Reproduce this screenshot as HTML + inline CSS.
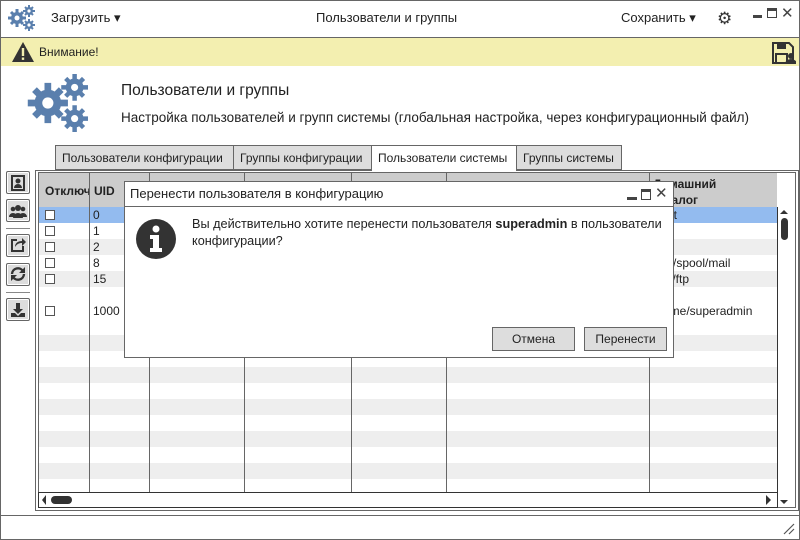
<!DOCTYPE html>
<html><head><meta charset="utf-8"><style>
*{box-sizing:border-box;margin:0;padding:0}
body{width:800px;height:540px;position:relative;overflow:hidden;background:#fff;font-family:"Liberation Sans","DejaVu Sans",sans-serif;font-size:12px;color:#222}
.a{position:absolute}
.bd{border:1px solid #666}
.tab{position:absolute;top:145px;height:25px;border:1px solid #666;background:#ddd;font-size:12px;line-height:24px;padding-left:6px;white-space:nowrap}
.sb{position:absolute;left:6px;width:24px;height:23px;border:1px solid #666;border-radius:2px;background:#ddd;box-shadow:inset 0 0 0 1px #fff}
.row{position:absolute;left:39px;width:738px;height:16px}
.g{background:#eee}
.cb{position:absolute;left:6px;top:3px;width:10px;height:10px;border:1px solid #555;background:#fff}
.cl{position:absolute;top:172px;height:320px;width:1px;background:#666}
.t{position:absolute;font-size:12px;line-height:16px}
.btn{position:absolute;top:327px;height:24px;border:1px solid #666;background:#ddd;text-align:center;line-height:22px;font-size:12px}
</style></head><body>
<div class="a bd" style="left:0;top:0;width:800px;height:540px"></div>
<svg class="a" style="left:8px;top:5px" width="28" height="26" viewBox="0 0 28 26" fill="#5a7fad">
<circle cx="9" cy="13" r="6"/><circle cx="21" cy="6" r="4"/><circle cx="21" cy="20" r="4"/>
<g stroke="#5a7fad" stroke-width="3"><path d="M9 4v18M0 13h18M3 7l12 12M15 7L3 19"/><path d="M21 0v12M15 6h12M17 2l8 8M25 2l-8 8M21 14v12M15 20h12M17 16l8 8M25 16l-8 8" stroke-width="2"/></g>
<circle cx="9" cy="13" r="2.5" fill="#fff"/><circle cx="21" cy="6" r="1.6" fill="#fff"/><circle cx="21" cy="20" r="1.6" fill="#fff"/></svg>
<div class="t" style="left:51px;top:10px;font-size:13px">Загрузить ▾</div>
<div class="t" style="left:316px;top:10px;font-size:13px">Пользователи и группы</div>
<div class="t" style="left:621px;top:10px;font-size:13px">Сохранить ▾</div>
<div class="a" style="left:717px;top:10px;font-size:17px;line-height:17px;color:#333">⚙</div>
<div class="a" style="left:753px;top:15px;width:9px;height:3px;background:#444"></div>
<div class="a" style="left:767px;top:8px;width:10px;height:10px;border:1.5px solid #444;border-top-width:3px"></div>
<div class="a" style="left:781px;top:4px;font-size:15px;color:#444">✕</div>
<div class="a" style="left:1px;top:37px;width:798px;height:1px;background:#666"></div>
<div class="a" style="left:1px;top:38px;width:798px;height:28px;background:#f3efb0"></div>
<svg class="a" style="left:11px;top:41px" width="24" height="22"><path d="M12 1L23 21H1Z" fill="#333"/><rect x="10.8" y="7" width="2.4" height="8" fill="#f3efb0"/><rect x="10.8" y="16.5" width="2.4" height="2.4" fill="#f3efb0"/></svg>
<div class="t" style="left:39px;top:44px">Внимание!</div>
<svg class="a" style="left:772px;top:42px" width="24" height="22"><path d="M1 1h16l4 4v16H1Z" fill="none" stroke="#333" stroke-width="2"/><rect x="5" y="1" width="9" height="6" fill="#333"/><rect x="4" y="12" width="11" height="9" fill="none" stroke="#333" stroke-width="2"/><circle cx="19" cy="14" r="3" fill="#333"/><path d="M13 22a6 5 0 0 1 12 0Z" fill="#333"/></svg>
<svg class="a" style="left:26px;top:74px" width="66" height="58" viewBox="0 0 28 26" fill="#5a7fad">
<circle cx="9" cy="13" r="6"/><circle cx="21" cy="6" r="4"/><circle cx="21" cy="20" r="4"/>
<g stroke="#5a7fad" stroke-width="3"><path d="M9 4v18M0 13h18M3 7l12 12M15 7L3 19"/><path d="M21 0v12M15 6h12M17 2l8 8M25 2l-8 8M21 14v12M15 20h12M17 16l8 8M25 16l-8 8" stroke-width="2"/></g>
<circle cx="9" cy="13" r="2.5" fill="#fff"/><circle cx="21" cy="6" r="1.6" fill="#fff"/><circle cx="21" cy="20" r="1.6" fill="#fff"/></svg>
<div class="t" style="left:121px;top:82px;font-size:15.5px;line-height:18px">Пользователи и группы</div>
<div class="t" style="left:121px;top:110px;font-size:13.5px;line-height:16px">Настройка пользователей и групп системы (глобальная настройка, через конфигурационный файл)</div>
<div class="tab" style="left:55px;width:179px">Пользователи конфигурации</div>
<div class="tab" style="left:233px;width:139px">Группы конфигурации</div>
<div class="tab" style="left:371px;width:146px;background:#fff;border-bottom-color:#fff;height:26px">Пользователи системы</div>
<div class="tab" style="left:516px;width:106px">Группы системы</div>
<div class="a bd" style="left:35px;top:170px;width:764px;height:341px;border-top:none"></div>
<div class="a" style="left:35px;top:170px;width:337px;height:1px;background:#666"></div>
<div class="a" style="left:516px;top:170px;width:283px;height:1px;background:#666"></div>
<div class="a bd" style="left:38px;top:172px;width:758px;height:336px"></div>
<div class="a" style="left:39px;top:173px;width:738px;height:34px;background:#ccc"></div>
<div class="t" style="left:45px;top:183px;font-weight:bold">Отключ</div>
<div class="t" style="left:94px;top:183px;font-weight:bold">UID</div>
<div class="t" style="left:653px;top:176px;font-weight:bold">Домашний<br>каталог</div>
<div class="row" style="top:207px;background:#93bbef"><div class="cb"></div></div>
<div class="row" style="top:223px"><div class="cb"></div></div>
<div class="row g" style="top:239px"><div class="cb"></div></div>
<div class="row" style="top:255px"><div class="cb"></div></div>
<div class="row g" style="top:271px"><div class="cb"></div></div>
<div class="row" style="top:303px"><div class="cb"></div></div>
<div class="row g" style="top:335px"></div>
<div class="row g" style="top:367px"></div>
<div class="row g" style="top:399px"></div>
<div class="row g" style="top:431px"></div>
<div class="row g" style="top:463px"></div>
<div class="t" style="left:93px;top:207px">0</div>
<div class="t" style="left:93px;top:223px">1</div>
<div class="t" style="left:93px;top:239px">2</div>
<div class="t" style="left:93px;top:255px">8</div>
<div class="t" style="left:93px;top:271px">15</div>
<div class="t" style="left:93px;top:303px">1000</div>
<div class="t" style="left:653px;top:207px">/root</div>
<div class="t" style="left:653px;top:255px">/var/spool/mail</div>
<div class="t" style="left:653px;top:271px">/srv/ftp</div>
<div class="t" style="left:653px;top:303px">/home/superadmin</div>
<div class="cl" style="left:89px"></div><div class="cl" style="left:149px"></div><div class="cl" style="left:244px"></div><div class="cl" style="left:351px"></div><div class="cl" style="left:446px"></div><div class="cl" style="left:649px"></div>
<div class="a" style="left:38px;top:492px;width:740px;height:16px;border:1px solid #333;background:#fff"></div>
<div class="a" style="left:51px;top:496px;width:21px;height:8px;border-radius:4px;background:#333"></div>
<div class="a" style="left:42px;top:495px;border:5px solid transparent;border-right:4px solid #333;border-left:0"></div>
<div class="a" style="left:766px;top:495px;border:5px solid transparent;border-left:5px solid #333;border-right:0"></div>
<div class="a" style="left:777px;top:207px;width:1px;height:301px;background:#333"></div>
<div class="a" style="left:781px;top:218px;width:7px;height:22px;border-radius:4px;background:#333"></div>
<div class="a" style="left:780px;top:210px;border:4px solid transparent;border-bottom:4px solid #333;border-top:0"></div>
<div class="a" style="left:780px;top:500px;border:4px solid transparent;border-top:4px solid #333;border-bottom:0"></div>
<div class="sb" style="top:171px"></div><div class="sb" style="top:199px"></div><div class="sb" style="top:234px"></div><div class="sb" style="top:263px"></div><div class="sb" style="top:298px"></div>
<div class="a" style="left:6px;top:228px;width:24px;height:1px;background:#888"></div>
<div class="a" style="left:6px;top:292px;width:24px;height:1px;background:#888"></div>
<svg class="a" style="left:10px;top:175px" width="16" height="16"><rect x="2" y="1" width="12" height="14" fill="none" stroke="#333" stroke-width="2"/><circle cx="8" cy="6" r="2.5" fill="#333"/><path d="M4 13a4 4 0 0 1 8 0Z" fill="#333"/></svg>
<svg class="a" style="left:9px;top:203px" width="18" height="16"><circle cx="9" cy="5" r="3" fill="#333"/><circle cx="4" cy="6" r="2.3" fill="#333"/><circle cx="14" cy="6" r="2.3" fill="#333"/><path d="M0 14a4 4 0 0 1 8 0ZM10 14a4 4 0 0 1 8 0ZM4 15a5 5 0 0 1 10 0Z" fill="#333"/></svg>
<svg class="a" style="left:10px;top:237px" width="16" height="16"><path d="M7 3H2v11h11V9" fill="none" stroke="#333" stroke-width="2"/><path d="M5 10c0-4 3-6 7-6V1l4 4-4 4V6c-3 0-5 1-7 4Z" fill="#333"/></svg>
<svg class="a" style="left:10px;top:266px" width="16" height="16"><path d="M2 8a6 6 0 0 1 11-3M14 8a6 6 0 0 1-11 3" fill="none" stroke="#333" stroke-width="2.4"/><path d="M15 1v6H9ZM1 15V9h6Z" fill="#333"/></svg>
<svg class="a" style="left:10px;top:302px" width="16" height="16"><path d="M6 1h4v6h3l-5 5-5-5h3Z" fill="#333"/><path d="M1 11h4l3 3 3-3h4v4H1Z" fill="#333"/></svg>
<div class="a bd" style="left:124px;top:181px;width:550px;height:177px;background:#fff"></div>
<div class="a" style="left:125px;top:206px;width:548px;height:1px;background:#666"></div>
<div class="t" style="left:130px;top:186px;font-size:13px">Перенести пользователя в конфигурацию</div>
<div class="a" style="left:627px;top:197px;width:10px;height:3px;background:#444"></div>
<div class="a" style="left:641px;top:189px;width:10px;height:11px;border:1.5px solid #444;border-top-width:3px"></div>
<div class="a" style="left:655px;top:184px;font-size:15px;color:#444">✕</div>
<svg class="a" style="left:135px;top:218px" width="42" height="42"><circle cx="21" cy="21" r="20" fill="#333"/><circle cx="21" cy="11" r="3.5" fill="#fff"/><path d="M15 17h9v13h3v4H15v-4h3v-9h-3Z" fill="#fff"/></svg>
<div class="t" style="left:192px;top:216px;font-size:12.7px;line-height:17px">Вы действительно хотите перенести пользователя <b>superadmin</b> в пользователи<br>конфигурации?</div>
<div class="btn" style="left:492px;width:83px">Отмена</div>
<div class="btn" style="left:584px;width:83px">Перенести</div>
<div class="a" style="left:1px;top:515px;width:798px;height:1px;background:#666"></div>
<svg class="a" style="left:783px;top:523px" width="12" height="12"><path d="M1 11L11 1M6 11l5-5" stroke="#555" stroke-width="1.2"/></svg>
</body></html>
